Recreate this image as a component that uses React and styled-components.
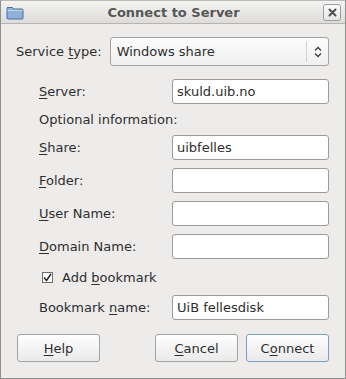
import React from "react";
import styled, { createGlobalStyle } from "styled-components";

const Global = createGlobalStyle`
  html, body {
    margin: 0;
    padding: 0;
    background: #edeceb;
  }
  * {
    box-sizing: border-box;
  }
`;

const Window = styled.div`
  width: 346px;
  height: 379px;
  display: flex;
  flex-direction: column;
  background: #edeceb;
  border: 1px solid #8f8f8f;
  border-top-color: #b8b8b8;
  font-family: "DejaVu Sans", sans-serif;
  font-size: 13px;
  color: #2e2e2e;
  overflow: hidden;
`;

const TitleBar = styled.div`
  height: 23px;
  flex: none;
  display: flex;
  align-items: center;
  padding: 0 4px 0 5px;
  background: linear-gradient(#f4f4f3, #dddcda);
  border-bottom: 1px solid #b5b4b2;
`;

const Title = styled.div`
  flex: 1;
  text-align: center;
  font-weight: bold;
  font-size: 13px;
  color: #575757;
`;

const CloseButton = styled.div`
  width: 18px;
  height: 17px;
  border: 1px solid #9d9d9d;
  border-radius: 3px;
  background: linear-gradient(#fbfbfb, #e6e6e6);
  display: flex;
  align-items: center;
  justify-content: center;
`;

const Body = styled.div`
  flex: 1;
  display: flex;
  flex-direction: column;
  padding: 13px 16px 0 15px;
`;

const ServiceRow = styled.div`
  display: flex;
  align-items: center;
  height: 29px;
  gap: 8px;
`;

const Combo = styled.div`
  flex: 1;
  height: 29px;
  display: flex;
  align-items: center;
  border: 1px solid #a2a2a2;
  border-radius: 3px;
  background: linear-gradient(#fdfdfd, #efefef);
  padding-left: 6px;
`;

const ComboText = styled.span`
  flex: 1;
`;

const ComboSep = styled.div`
  width: 1px;
  height: 21px;
  background: #d2d2d2;
`;

const ComboArrow = styled.div`
  width: 21px;
  display: flex;
  justify-content: center;
`;

const Form = styled.div`
  display: grid;
  grid-template-columns: 133px 157px;
  margin: 13px 0 0 23px;
`;

const BookmarkForm = styled(Form)`
  margin-top: 0;
`;

const Label = styled.label`
  display: block;
  height: ${(p) => (p.$short ? "15px" : "25px")};
  line-height: ${(p) => (p.$short ? "15px" : "25px")};
  grid-column: ${(p) => (p.$wide ? "1 / 3" : "1")};
  margin-top: ${(p) => (p.$first ? "0" : "8px")};
  white-space: nowrap;
`;

const Entry = styled.div`
  height: 25px;
  margin-top: ${(p) => (p.$first ? "0" : "8px")};
  border: 1px solid #9b9b9b;
  border-radius: 3px;
  background: #fff;
  display: flex;
  align-items: center;
  padding-left: 4px;
`;

const CheckRow = styled.div`
  grid-column: 1 / 3;
  height: 20px;
  margin-top: 8px;
  display: flex;
  align-items: center;
  padding-left: 3px;
  gap: 9px;
`;

const CheckBox = styled.div`
  width: 11px;
  height: 11px;
  border: 1px solid #6e6e6e;
  background: #fff;
  display: flex;
  align-items: center;
  justify-content: center;
`;

const Buttons = styled.div`
  display: flex;
  margin-top: 14px;
  padding-left: 1px;
`;

const Button = styled.div`
  width: 83px;
  height: 28px;
  display: flex;
  align-items: center;
  justify-content: center;
  border: 1px solid ${(p) => (p.$default ? "#7f9cc0" : "#a3a3a3")};
  border-radius: 3px;
  background: linear-gradient(#fefefe, #eaeaea);
  margin-left: ${(p) => p.$gap || 0}px;
`;

const U = styled.span`
  text-decoration: underline;
  text-underline-offset: 2px;
`;

const FolderIcon = () => (
  <svg width="18" height="15" viewBox="0 0 18 15">
    <path d="M1.5 2.5 h5 l1.5 1.5 h8 a1 1 0 0 1 1 1 v8 a1 1 0 0 1 -1 1 h-14 a1 1 0 0 1 -1 -1 v-9.5 a1 1 0 0 1 1 -1z" fill="#8fb0d8" stroke="#4d6f9c" strokeWidth="1" />
    <path d="M1.5 5.5 h15" stroke="#c6d8ee" strokeWidth="1" />
  </svg>
);

const CloseIcon = () => (
  <svg width="9" height="9" viewBox="0 0 9 9">
    <path d="M1.5 1.5 L7.5 7.5 M7.5 1.5 L1.5 7.5" stroke="#4f4f4f" strokeWidth="2" strokeLinecap="round" />
  </svg>
);

const UpDown = () => (
  <svg width="8" height="12" viewBox="0 0 8 12">
    <path d="M1 4.5 L4 1.5 L7 4.5 M1 7.5 L4 10.5 L7 7.5" fill="none" stroke="#3c3c3c" strokeWidth="1.3" />
  </svg>
);

const Tick = () => (
  <svg width="9" height="9" viewBox="0 0 9 9">
    <path d="M1 4.5 L3.5 7.5 L8 1" fill="none" stroke="#2a2a2a" strokeWidth="1.6" />
  </svg>
);

const fields = [
  { key: "F", rest: "older:" },
  { key: "U", rest: "ser Name:" },
  { key: "D", rest: "omain Name:" },
];

const App = () => {
  return (
    <>
      <Global />
      <Window>
        <TitleBar>
          <FolderIcon />
          <Title>Connect to Server</Title>
          <CloseButton>
            <CloseIcon />
          </CloseButton>
        </TitleBar>
        <Body>
          <ServiceRow>
            <span>
              Service <U>t</U>ype:
            </span>
            <Combo>
              <ComboText>Windows share</ComboText>
              <ComboSep />
              <ComboArrow>
                <UpDown />
              </ComboArrow>
            </Combo>
          </ServiceRow>

          <Form>
            <Label $first>
              <U>S</U>erver:
            </Label>
            <Entry $first>skuld.uib.no</Entry>

            <Label $wide $short>
              Optional information:
            </Label>

            <Label>
              <U>S</U>hare:
            </Label>
            <Entry>uibfelles</Entry>

            {fields.map((f) => (
              <React.Fragment key={f.rest}>
                <Label>
                  <U>{f.key}</U>
                  {f.rest}
                </Label>
                <Entry />
              </React.Fragment>
            ))}

            <CheckRow>
              <CheckBox>
                <Tick />
              </CheckBox>
              <span>
                Add <U>b</U>ookmark
              </span>
            </CheckRow>
          </Form>

          <BookmarkForm>
            <Label>
              Bookmark <U>n</U>ame:
            </Label>
            <Entry>UiB fellesdisk</Entry>
          </BookmarkForm>

          <Buttons>
            <Button>
              <span>
                <U>H</U>elp
              </span>
            </Button>
            <Button $gap={55}>
              <span>
                <U>C</U>ancel
              </span>
            </Button>
            <Button $gap={8} $default>
              <span>
                C<U>o</U>nnect
              </span>
            </Button>
          </Buttons>
        </Body>
      </Window>
    </>
  );
};

export default App;
